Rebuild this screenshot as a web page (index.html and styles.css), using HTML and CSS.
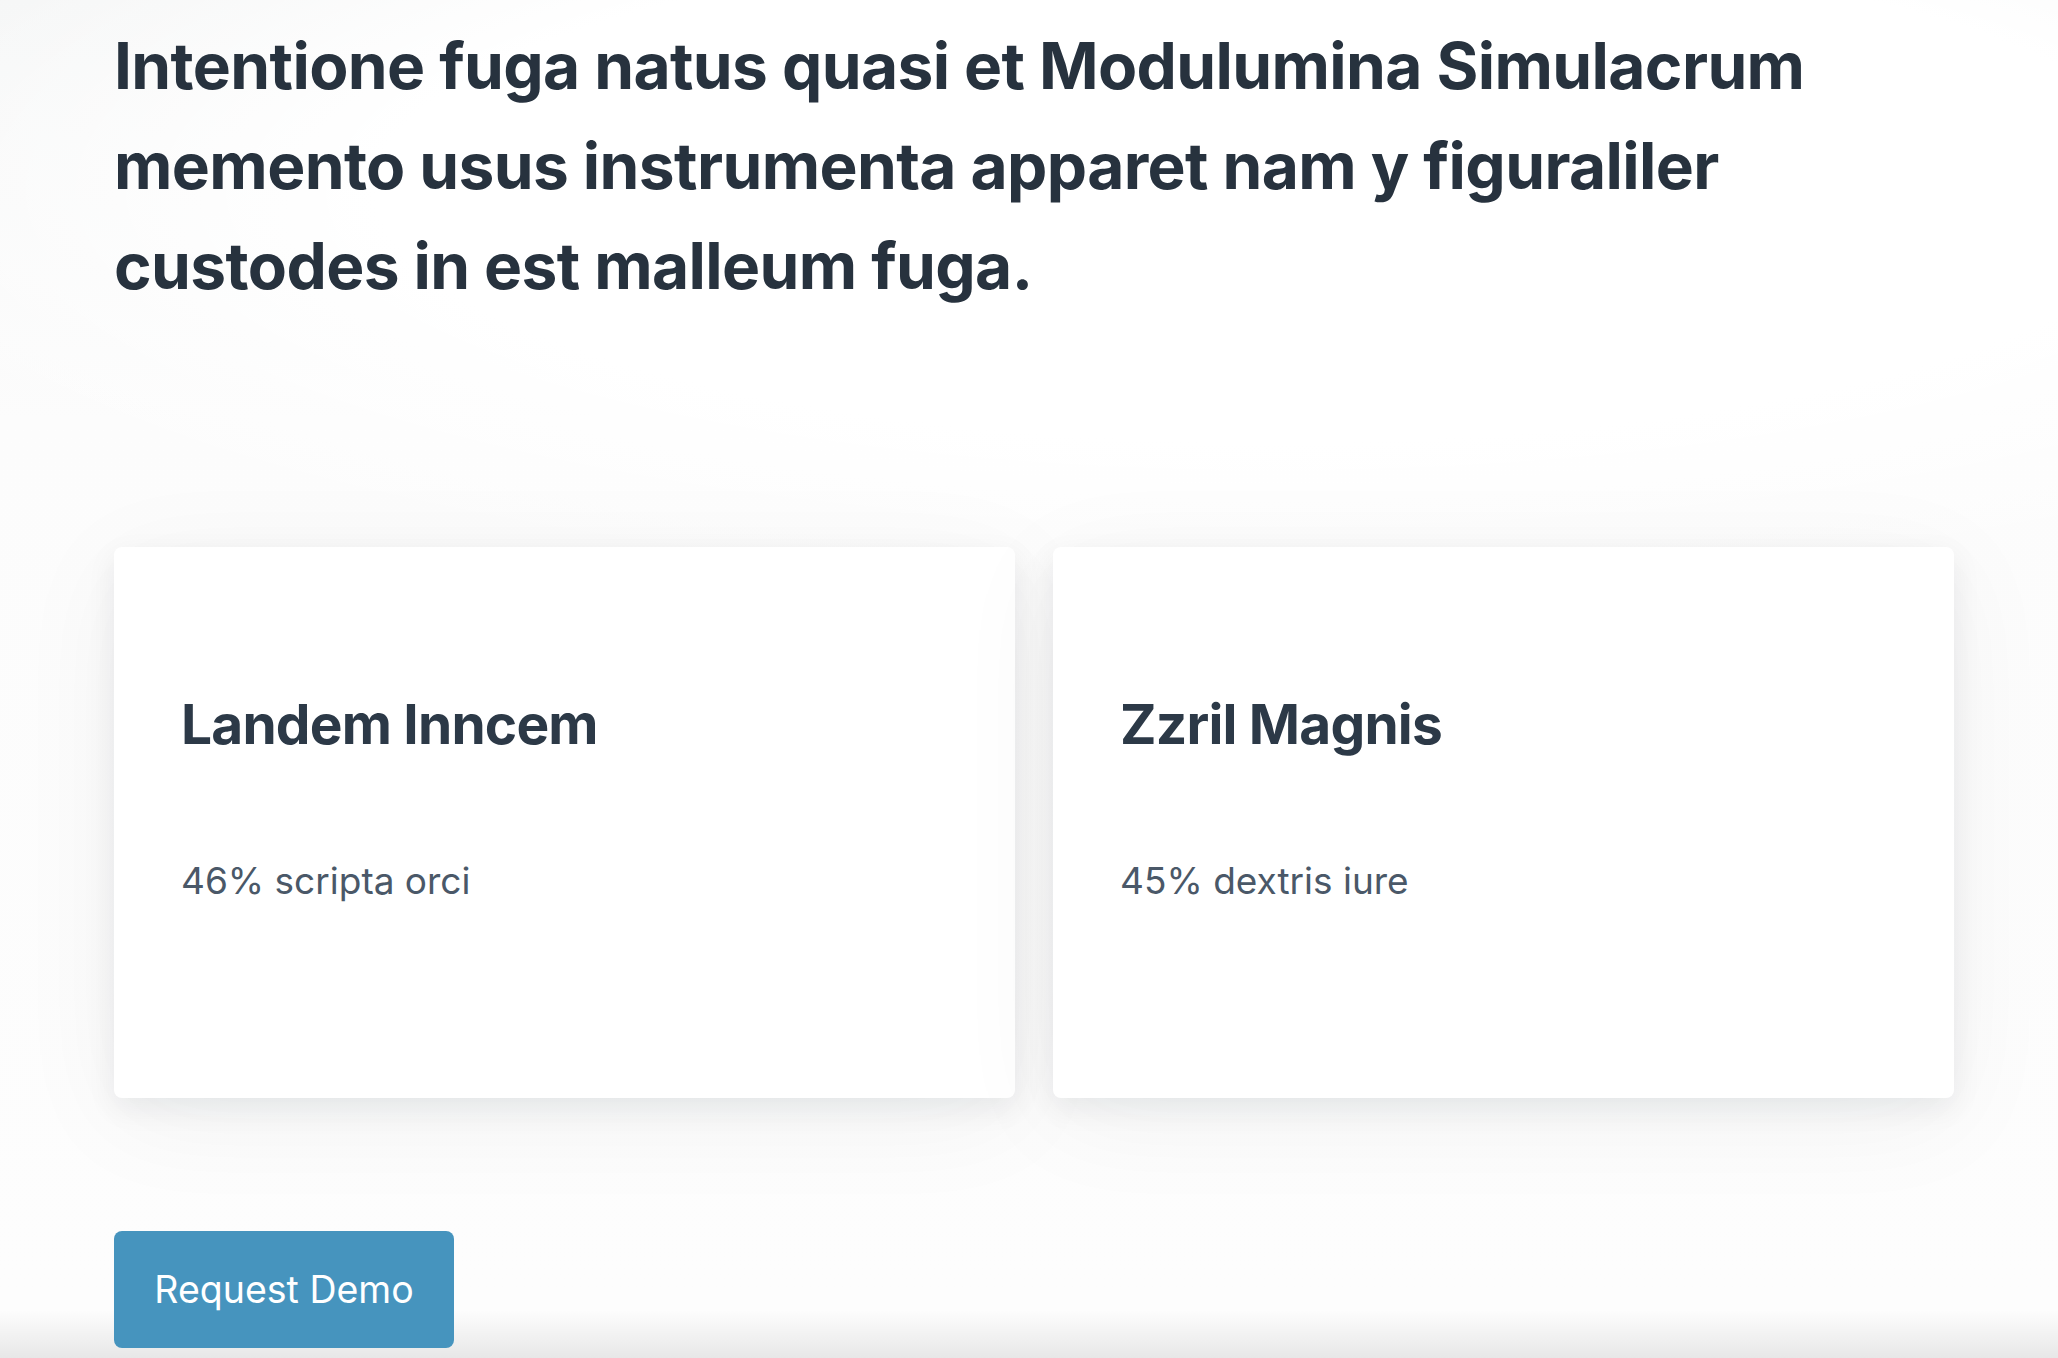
FILE: index.html
```html
<!DOCTYPE html>
<html lang="la">
<head>
<meta charset="utf-8">
<title>Intentione</title>
<link rel="stylesheet" href="styles.css">
</head>
<body>
<main class="page">
  <section class="hero">
    <h1 class="hero-title">Intentione fuga natus quasi et Modulumina Simulacrum memento usus instrumenta apparet nam y figuraliler custodes in est malleum fuga.</h1>
  </section>
  <section class="cards">
    <article class="card">
      <h2 class="card-title">Landem Inncem</h2>
      <p class="card-text">46% scripta orci</p>
    </article>
    <article class="card">
      <h2 class="card-title">Zzril Magnis</h2>
      <p class="card-text">45% dextris iure</p>
    </article>
  </section>
  <div class="actions">
    <a class="btn" href="#">Request Demo</a>
  </div>
</main>
</body>
</html>
```

FILE: styles.css
```css
html, body {
  margin: 0;
  padding: 0;
}
body {
  font-family: Inter, "Noto Sans", "Liberation Sans", sans-serif;
  background:
    linear-gradient(to bottom, rgba(0,0,0,0) 1310px, rgba(0,0,0,0.085) 1358px),
    radial-gradient(ellipse 1500px 420px at 62% 190px, #ffffff 60%, rgba(255,255,255,0) 100%),
    linear-gradient(to bottom, #f5f6f6 0, #fcfcfc 420px, #fdfdfd 1300px);
  background-color: #fdfdfd;
  min-height: 1358px;
  overflow: hidden;
}
.page {
  width: 1840px;
  padding: 16px 0 0 114px;
}
.hero-title {
  margin: 0;
  width: 1800px;
  font-size: 64px;
  line-height: 100px;
  font-weight: 700;
  letter-spacing: -0.6px;
  color: #27323e;
}
.cards {
  display: grid;
  grid-template-columns: 901px 901px;
  gap: 38px;
  margin-top: 231px;
}
.card {
  height: 551px;
  box-sizing: border-box;
  background: #ffffff;
  border-radius: 8px;
  padding: 147px 67px 0 67px;
  box-shadow: 0 10px 30px rgba(20, 30, 40, 0.07), 0 20px 110px rgba(20, 30, 40, 0.05);
}
.card-title {
  margin: 0;
  font-size: 55px;
  line-height: 60px;
  font-weight: 700;
  letter-spacing: -0.8px;
  color: #2c3947;
}
.card-text {
  margin: 105px 0 0 0;
  font-size: 37px;
  line-height: 44px;
  font-weight: 400;
  color: #4a5868;
}
.actions {
  margin-top: 133px;
}
.btn {
  display: inline-flex;
  align-items: center;
  justify-content: center;
  width: 340px;
  height: 117px;
  box-sizing: border-box;
  background: #4694be;
  color: #ffffff;
  border-radius: 8px;
  font-size: 37.5px;
  font-weight: 400;
  text-decoration: none;
}
```
